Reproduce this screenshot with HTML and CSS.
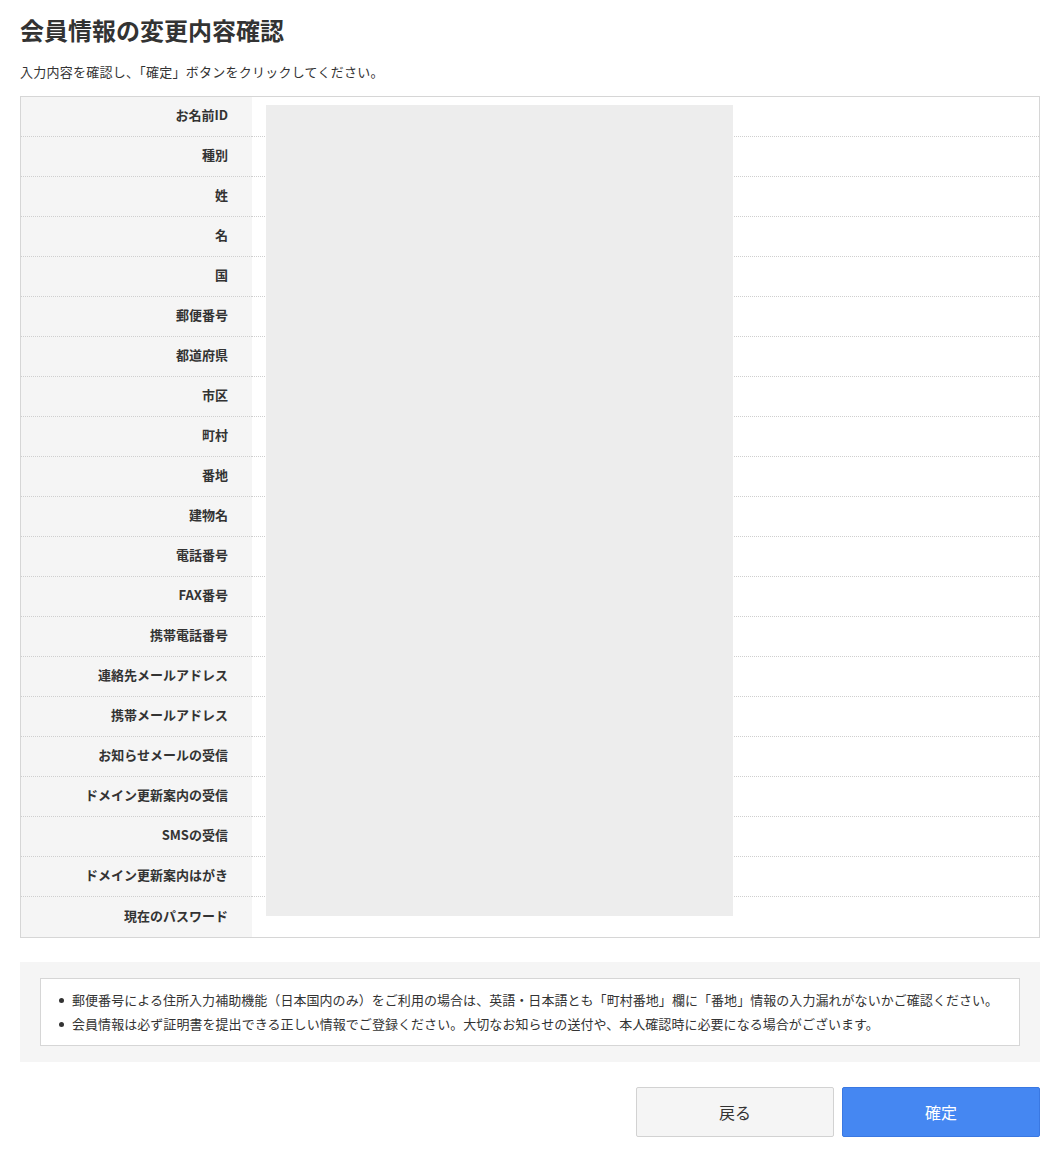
FILE: index.html
```html
<!DOCTYPE html>
<html lang="ja">
<head>
<meta charset="utf-8">
<title>会員情報の変更内容確認</title>
<link rel="stylesheet" href="styles.css">
</head>
<body>
<main class="page">
  <h1 class="title">会員情報の変更内容確認</h1>
  <p class="lead">入力内容を確認し、「確定」ボタンをクリックしてください。</p>

  <div class="table-wrap">
    <table class="confirm">
      <tbody>
        <tr><th>お名前ID</th><td></td></tr>
        <tr><th>種別</th><td></td></tr>
        <tr><th>姓</th><td></td></tr>
        <tr><th>名</th><td></td></tr>
        <tr><th>国</th><td></td></tr>
        <tr><th>郵便番号</th><td></td></tr>
        <tr><th>都道府県</th><td></td></tr>
        <tr><th>市区</th><td></td></tr>
        <tr><th>町村</th><td></td></tr>
        <tr><th>番地</th><td></td></tr>
        <tr><th>建物名</th><td></td></tr>
        <tr><th>電話番号</th><td></td></tr>
        <tr><th>FAX番号</th><td></td></tr>
        <tr><th>携帯電話番号</th><td></td></tr>
        <tr><th>連絡先メールアドレス</th><td></td></tr>
        <tr><th>携帯メールアドレス</th><td></td></tr>
        <tr><th>お知らせメールの受信</th><td></td></tr>
        <tr><th>ドメイン更新案内の受信</th><td></td></tr>
        <tr><th>SMSの受信</th><td></td></tr>
        <tr><th>ドメイン更新案内はがき</th><td></td></tr>
        <tr><th>現在のパスワード</th><td></td></tr>
      </tbody>
    </table>
    <div class="redact"></div>
  </div>

  <section class="notice">
    <ul class="notice-box">
      <li>郵便番号による住所入力補助機能（日本国内のみ）をご利用の場合は、英語・日本語とも「町村番地」欄に「番地」情報の入力漏れがないかご確認ください。</li>
      <li>会員情報は必ず証明書を提出できる正しい情報でご登録ください。大切なお知らせの送付や、本人確認時に必要になる場合がございます。</li>
    </ul>
  </section>

  <div class="actions">
    <button class="btn btn-back" type="button">戻る</button>
    <button class="btn btn-ok" type="button">確定</button>
  </div>
</main>
</body>
</html>
```

FILE: styles.css
```css
* { box-sizing: border-box; }

html, body {
  margin: 0;
  padding: 0;
  background: #fff;
}

body {
  font-family: "Noto Sans CJK JP", "Noto Sans", sans-serif;
  color: #333;
}

.page {
  padding: 0 20px 20px;
}

.title {
  margin: 0;
  padding-top: 14px;
  font-size: 24px;
  line-height: 32px;
  font-weight: bold;
  color: #333;
}

.lead {
  margin: 16px 0 0;
  font-size: 13px;
  line-height: 20px;
  letter-spacing: 0.25px;
  color: #333;
}

.table-wrap {
  position: relative;
  margin-top: 14px;
}

.confirm {
  width: 100%;
  border-collapse: separate;
  border-spacing: 0;
  border: 1px solid #d6d6d6;
}

.confirm th,
.confirm td {
  height: 40px;
  border-bottom: 1px dotted #cfcfcf;
}

.confirm tr:last-child th,
.confirm tr:last-child td {
  border-bottom: none;
}

.confirm th {
  width: 231px;
  background: #f5f5f5;
  text-align: right;
  padding: 0 24px 4px 0;
  font-size: 13px;
  font-weight: bold;
  color: #333;
  white-space: nowrap;
}

.confirm td {
  padding: 0;
}

.redact {
  position: absolute;
  left: 246px;
  top: 9px;
  width: 467px;
  height: 811px;
  background: #ededed;
}

.notice {
  margin-top: 24px;
  background: #f5f5f5;
  padding: 16px 20px;
}

.notice-box {
  margin: 0;
  list-style: none;
  background: #fff;
  border: 1px solid #d6d6d6;
  padding: 9px 16px 9px 31px;
}

.notice-box li {
  position: relative;
  font-size: 13px;
  line-height: 24px;
  letter-spacing: 0.05px;
  color: #333;
}

.notice-box li::before {
  content: "";
  position: absolute;
  left: -13px;
  top: 10px;
  width: 5px;
  height: 5px;
  border-radius: 50%;
  background: #333;
}

.actions {
  display: flex;
  justify-content: flex-end;
  gap: 8px;
  margin-top: 25px;
}

.btn {
  width: 198px;
  height: 50px;
  font-family: "Noto Sans CJK JP", "Noto Sans", sans-serif;
  font-size: 16px;
  border-radius: 2px;
  cursor: pointer;
}

.btn-back {
  background: #f5f5f5;
  border: 1px solid #d2d2d2;
  color: #333;
}

.btn-ok {
  background: #4587f2;
  border: 1px solid #3a78e2;
  color: #fff;
}
```
